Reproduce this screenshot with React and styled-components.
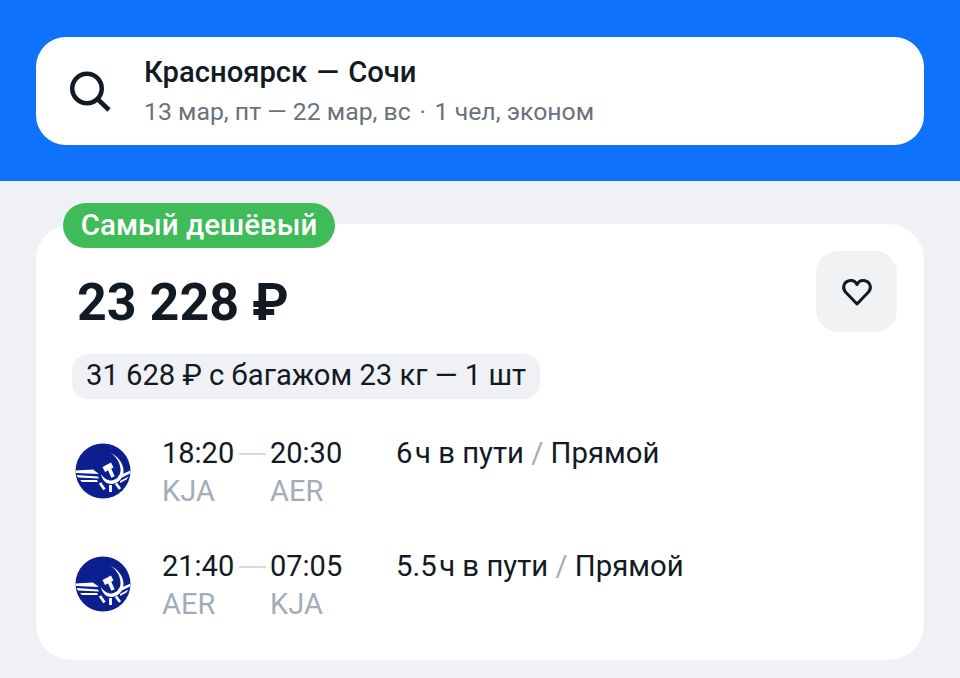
import React from "react";
import styled, { createGlobalStyle } from "styled-components";

const Global = createGlobalStyle`
  html, body { margin: 0; padding: 0; background: #eff1f4; }
  body { font-family: Roboto, "Noto Sans", sans-serif; }
  * { box-sizing: border-box; }
`;
const Page = styled.div`
  width: 960px; height: 678px; overflow: hidden; background: #eff1f4;
`;
const Header = styled.header`
  height: 181px; background: #0f72fb; padding: 37px 36px 0;
`;
const SearchBox = styled.div`
  height: 108px; background: #fff; border-radius: 30px;
  display: flex; align-items: center; padding-left: 32px; gap: 31px;
`;
const SearchText = styled.div`display: flex; flex-direction: column; gap: 8px;`;
const Route = styled.div`
  font-size: 29.2px; line-height: 34px; font-weight: 500; color: #121a24; white-space: pre; word-spacing: 2px;
`;
const Dates = styled.div`
  font-size: 24.8px; line-height: 30px; color: #69727c; white-space: pre;
`;
const Dot = styled.span`margin: 0 2.5px;`;
const Main = styled.main`padding: 43px 36px 0;`;
const Card = styled.section`
  position: relative; height: 436px; background: #fff; border-radius: 36px;
  padding: 49px 27px 0 41px;
`;
const Badge = styled.div`
  position: absolute; left: 27px; top: -21px; height: 45px; width: 272px;
  background: #3fbb5a; border-radius: 23px; color: #fff; padding-bottom: 2px;
  display: flex; align-items: center; justify-content: center;
  font-size: 29.5px; font-weight: 500;
`;
const PriceRow = styled.div`display: flex; justify-content: space-between; align-items: flex-start;`;
const Price = styled.div`
  font-size: 52px; line-height: 60px; font-weight: 700; color: #121a24; white-space: pre;
`;
const Fav = styled.div`
  width: 81px; height: 81px; margin-top: -22px; border-radius: 22px; background: #f0f2f4;
  display: flex; align-items: center; justify-content: center;
`;
const Baggage = styled.div`
  display: inline-flex; align-items: center; height: 45px; margin: 21px 0 0 -5px; padding: 0 14px 3px;
  background: #eff1f4; border-radius: 16px;
  font-size: 29.2px; color: #121a24; white-space: pre;
`;
const Flights = styled.div`display: flex; flex-direction: column; gap: 37px; margin: 35px 0 0 -1px;`;
const Flight = styled.div`display: flex; align-items: center; height: 76px;`;
const Logo = styled.svg`width: 56px; height: 56px; flex: none; margin: 0 31px 2px -1px;`;
const Col = styled.div`display: flex; flex-direction: column; width: 72px; flex: none;`;
const Strong = styled.div`font-size: 29px; line-height: 38px; color: #121a24; white-space: pre;`;
const Code = styled.div`font-size: 29px; line-height: 38px; color: #a3adb8; white-space: pre;`;
const Dash = styled.div`
  width: 27px; height: 2px; background: #d6dadf; margin: 19px 4px 0 5px; flex: none; align-self: flex-start;
`;
const Info = styled.div`
  align-self: flex-start; margin-left: 54px; font-size: 29.3px; line-height: 38px; color: #121a24; white-space: pre;
`;
const Num = styled.span`margin-right: 2.5px;`;
const Slash = styled.span`color: #a3adb8;`;

const AeroLogo = () => (
  <Logo viewBox="0 0 56 56">
    <circle cx="28" cy="28" r="27.5" fill="#0c1f8e" />
    <path d="M34 9 C43 13 48 20 48.5 27 C49 35 43 41 36 41 C31 41 27 37 26 31 C28.5 35 32 37.5 36.5 37.5 C42 37 46 32 45.5 26 C45 19 41 13 34 9 Z" fill="#fff" />
    <path d="M27.5 24 L36 19.5 L38.5 24.5 L30 29 Z" fill="#fff" />
    <path d="M34 25 L38 34" stroke="#fff" strokeWidth="3.6" fill="none" />
    <path d="M0.5 27.5 L18 26.5 L24 31 L1 30 Z M1.5 32 L23 33.5 L24 35.5 L3 34.5 Z M5 37 L22 37 L23 39 L7 39 Z" fill="#fff" />
    <path d="M43 33 L55.5 27.5 L55 30.5 L45 35.5 Z M45 38 L53.5 33.5 L51.5 36.5 L45 40 Z" fill="#fff" />
    <path d="M25 40 L29.5 46.5 M41 40.5 L45 46 M35.5 42 L35.5 49" stroke="#fff" strokeWidth="2.8" fill="none" />
  </Logo>
);

const Row = ({ dep, arr, from, to, dur }) => (
  <Flight>
    <AeroLogo />
    <Col><Strong>{dep}</Strong><Code>{from}</Code></Col>
    <Dash />
    <Col><Strong>{arr}</Strong><Code>{to}</Code></Col>
    <Info><Num>{dur}</Num>ч в пути <Slash>/</Slash> Прямой</Info>
  </Flight>
);

export default function App() {
  return (
    <Page>
      <Global />
      <Header>
        <SearchBox>
          <svg width="45" height="45" viewBox="0 0 45 45" fill="none" stroke="#121a24" strokeWidth="4.5">
            <circle cx="19" cy="19.5" r="14.75" />
            <path d="M29.5 30 L41 41" />
          </svg>
          <SearchText>
            <Route>Красноярск — Сочи</Route>
            <Dates>13 мар, пт — 22 мар, вс <Dot>·</Dot> 1 чел, эконом</Dates>
          </SearchText>
        </SearchBox>
      </Header>
      <Main>
        <Card>
          <Badge>Самый дешёвый</Badge>
          <PriceRow>
            <Price>23 228 ₽</Price>
            <Fav>
              <svg width="32" height="32" viewBox="0 0 32 32" fill="none" stroke="#121a24" strokeWidth="3" strokeLinejoin="round">
                <path d="M16 28 L4.5 16 C1 12 2.5 5.5 9 4.5 C12 4 14.8 6 16 8.5 C17.2 6 20 4 23 4.5 C29.5 5.5 31 12 27.5 16 Z" />
              </svg>
            </Fav>
          </PriceRow>
          <Baggage>31 628 ₽ с багажом 23 кг — 1 шт</Baggage>
          <Flights>
            <Row dep="18:20" arr="20:30" from="KJA" to="AER" dur="6" />
            <Row dep="21:40" arr="07:05" from="AER" to="KJA" dur="5.5" />
          </Flights>
        </Card>
      </Main>
    </Page>
  );
}
